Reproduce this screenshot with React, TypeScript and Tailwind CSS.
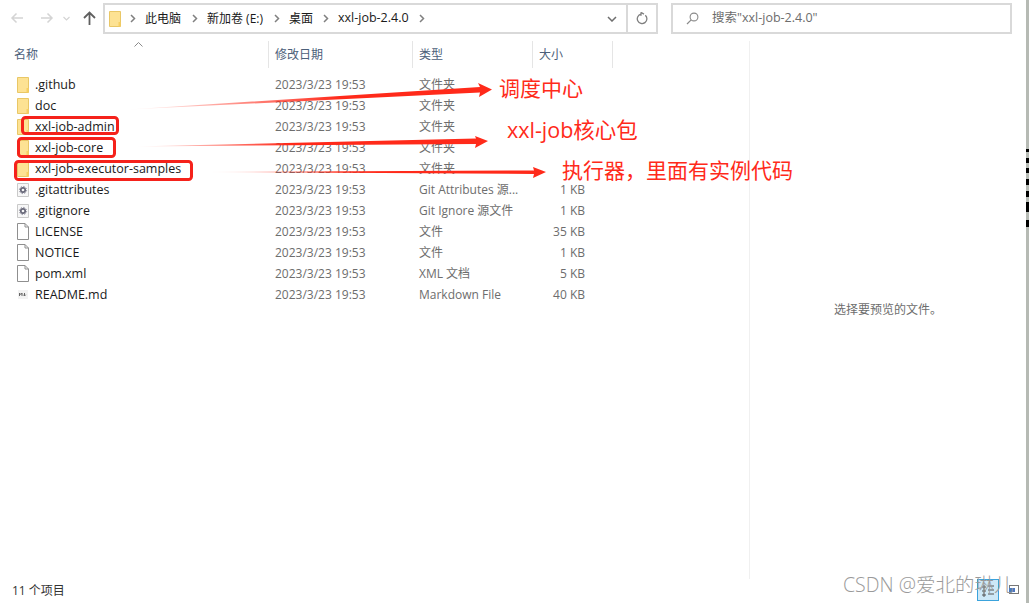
import { Fragment } from "react";

type Kind = "folder" | "config" | "file" | "md";

const rows: { name: string; kind: Kind; type: string; size?: string }[] = [
  { name: ".github", kind: "folder", type: "文件夹" },
  { name: "doc", kind: "folder", type: "文件夹" },
  { name: "xxl-job-admin", kind: "folder", type: "文件夹" },
  { name: "xxl-job-core", kind: "folder", type: "文件夹" },
  { name: "xxl-job-executor-samples", kind: "folder", type: "文件夹" },
  { name: ".gitattributes", kind: "config", type: "Git Attributes 源...", size: "1 KB" },
  { name: ".gitignore", kind: "config", type: "Git Ignore 源文件", size: "1 KB" },
  { name: "LICENSE", kind: "file", type: "文件", size: "35 KB" },
  { name: "NOTICE", kind: "file", type: "文件", size: "1 KB" },
  { name: "pom.xml", kind: "file", type: "XML 文档", size: "5 KB" },
  { name: "README.md", kind: "md", type: "Markdown File", size: "40 KB" },
];

const crumbs = [
  { label: "此电脑", cls: "w-[36px] mr-[11px]" },
  { label: "新加卷 (E:)", cls: "w-[58px] mr-[9px]" },
  { label: "桌面", cls: "w-[24px] mr-[10px]" },
  { label: "xxl-job-2.4.0", cls: "w-[71px] mr-[10px] text-[12.5px]" },
];

function FolderIcon({ className = "" }: { className?: string }) {
  return (
    <svg width="14" height="16" viewBox="0 0 14 16" className={className}>
      <path d="M1.5 .5h11v15h-11z" fill="#fde293" stroke="#e9c766" />
      <path d="M10.5 11h2v4.500h-2z" fill="#f6cf62" />
    </svg>
  );
}

function FileIcon({ kind }: { kind: Kind }) {
  if (kind === "folder") return <FolderIcon />;
  if (kind === "md")
    return (
      <svg width="14" height="16" viewBox="0 0 14 16">
        <path d="M2 3h10v9H2z" fill="#f2f2f2" />
        <path d="M3.5 9V6l1.300 1.600L6 6v3M8.500 6v3M7.300 7.700l1.200 1.300 1.200-1.300" fill="none" stroke="#666" strokeWidth="1" />
      </svg>
    );
  if (kind === "config")
    return (
      <svg width="14" height="16" viewBox="0 0 14 16">
        <path d="M1.5 1.5h11v13h-11z" fill="#f7f7f7" stroke="#c9c9c9" />
        <circle cx="7" cy="8" r="2.2" fill="none" stroke="#667" strokeWidth="1.7" />
        <circle cx="7" cy="8" r="3.6" fill="none" stroke="#889" strokeWidth="1" strokeDasharray="1.4 1.4" />
      </svg>
    );
  return (
    <svg width="14" height="17" viewBox="0 0 14 17">
      <path d="M1.5 .5h7.500l3.500 3.500v12.500h-11z" fill="#fff" stroke="#8f8f8f" />
      <path d="M9 .5v3.500h3.500" fill="none" stroke="#8f8f8f" />
    </svg>
  );
}

function Chevron() {
  return (
    <svg width="6" height="9" viewBox="0 0 6 9" className="shrink-0">
      <path d="M1 1l3.500 3.500L1 8" fill="none" stroke="#808080" strokeWidth="1.500" />
    </svg>
  );
}

function Toolbar() {
  return (
    <div className="flex h-[34px] items-start pt-[3px]">
      <div className="flex h-[30px] w-[103px] shrink-0 items-center pl-[10px]">
        <svg width="14" height="12" viewBox="0 0 14 12">
          <path d="M13 6H2M6.500 1.500L2 6l4.500 4.500" fill="none" stroke="#d4d4d4" strokeWidth="1.500" />
        </svg>
        <svg width="14" height="12" viewBox="0 0 14 12" className="ml-[16px]">
          <path d="M1 6h11M7.500 1.500L12 6l-4.500 4.500" fill="none" stroke="#d4d4d4" strokeWidth="1.500" />
        </svg>
        <svg width="7" height="5" viewBox="0 0 7 5" className="ml-[9px]">
          <path d="M.5 1l3 3 3-3" fill="none" stroke="#d4d4d4" strokeWidth="1.200" />
        </svg>
        <svg width="13" height="14" viewBox="0 0 13 14" className="ml-[13px]">
          <path d="M6.500 14V2M1 7l5.500-5.500L12 7" fill="none" stroke="#5f5f5f" strokeWidth="1.800" />
        </svg>
      </div>
      <div className="flex h-[31px] w-[555px] shrink-0 items-center border-2 border-[#d9d9d9] pl-[3px] text-[12px] text-[#1a1a1a]">
        <FolderIcon />
        <div className="ml-[8px] flex items-center">
          {crumbs.map((c) => (
            <Fragment key={c.label}>
              <Chevron />
              <span className={`ml-[9px] whitespace-nowrap ${c.cls}`}>{c.label}</span>
            </Fragment>
          ))}
          <Chevron />
        </div>
        <div className="ml-auto flex h-full items-center">
          <svg width="10" height="6" viewBox="0 0 10 6">
            <path d="M1 1l4 4 4-4" fill="none" stroke="#6e6e6e" strokeWidth="1.500" />
          </svg>
          <div className="ml-[9px] flex h-full w-[30px] items-center justify-center border-l-2 border-[#d9d9d9]">
            <svg width="12" height="13" viewBox="0 0 12 13">
              <path d="M9.300 3.200A4.800 4.800 0 1 1 5 2.100M5 .2v3.600M5 .4l3 1.700" fill="none" stroke="#808080" strokeWidth="1.300" />
            </svg>
          </div>
        </div>
      </div>
      <div className="ml-[13px] flex h-[31px] w-[341px] shrink-0 items-center border-2 border-[#d9d9d9] pl-[13px] text-[12.5px] text-[#6d6d6d]">
        <svg width="13" height="13" viewBox="0 0 13 13">
          <circle cx="8" cy="5" r="3.900" fill="none" stroke="#8a8a8a" strokeWidth="1.100" />
          <path d="M5.200 7.800L1 12" stroke="#8a8a8a" strokeWidth="1.200" />
        </svg>
        <span className="ml-[13px]">搜索"xxl-job-2.4.0"</span>
      </div>
    </div>
  );
}

function HeaderRow() {
  const cols = [
    { label: "名称", cls: "w-[269px] pl-[14px]" },
    { label: "修改日期", cls: "w-[144px] pl-[6px]" },
    { label: "类型", cls: "w-[120px] pl-[6px]" },
    { label: "大小", cls: "w-[80px] pl-[6px]" },
  ];
  return (
    <div className="relative mt-[7px] flex h-[27px] text-[12px] text-[#4c607a]">
      {cols.map((c) => (
        <div key={c.label} className={`flex items-center border-r border-[#e5e5e5] ${c.cls}`}>
          {c.label}
        </div>
      ))}
      <svg width="9" height="5" viewBox="0 0 9 5" className="absolute left-[134px] top-[1px]">
        <path d="M.5 4.500l4-4 4 4" fill="none" stroke="#8a8a8a" />
      </svg>
    </div>
  );
}

function FileRow({ row }: { row: (typeof rows)[number] }) {
  return (
    <div className="flex h-[21px] items-center text-[12px]">
      <div className="flex w-[275px] items-center pl-[16px]">
        <div className="flex w-[19px]">
          <FileIcon kind={row.kind} />
        </div>
        <span className="whitespace-nowrap pt-[2px] text-[12.5px] text-[#1a1a1a]">{row.name}</span>
      </div>
      <span className="w-[144px] whitespace-nowrap text-[#6d6d6d]">2023/3/23 19:53</span>
      <span className="w-[120px] whitespace-nowrap text-[#6d6d6d]">{row.type}</span>
      <span className="w-[46px] whitespace-nowrap text-right text-[#6d6d6d]">{row.size}</span>
    </div>
  );
}

function Annotations() {
  const red = "#ff2a1a";
  return (
    <>
      <svg width="1029" height="603" viewBox="0 0 1029 603" className="pointer-events-none absolute left-0 top-0">
        <defs>
          <linearGradient id="a1" x1="128" x2="340" y1="0" y2="0" gradientUnits="userSpaceOnUse">
            <stop offset="0" stopColor={red} stopOpacity="0" />
            <stop offset="1" stopColor={red} />
          </linearGradient>
          <linearGradient id="a2" x1="133" x2="290" y1="0" y2="0" gradientUnits="userSpaceOnUse">
            <stop offset="0" stopColor={red} stopOpacity="0" />
            <stop offset="1" stopColor={red} />
          </linearGradient>
          <linearGradient id="a3" x1="205" x2="340" y1="0" y2="0" gradientUnits="userSpaceOnUse">
            <stop offset="0" stopColor={red} stopOpacity="0" />
            <stop offset="1" stopColor={red} />
          </linearGradient>
        </defs>
        <path d="M128 109.500L480 87L478 83L492 89.500L479 97L480 92.500z" fill="url(#a1)" />
        <path d="M133 146.500L476 138.500L475 136L488 141L475 148L476 144z" fill="url(#a2)" />
        <path d="M205 172L534 170.500L533 167L546 172L533 178L534 174z" fill="url(#a3)" />
        <rect x="22.500" y="117.500" width="95" height="16" rx="3" fill="none" stroke="#f5221b" strokeWidth="3" />
        <rect x="18.500" y="138.500" width="96" height="18" rx="3" fill="none" stroke="#f5221b" strokeWidth="3" />
        <rect x="15.500" y="161.500" width="176" height="18" rx="3" fill="none" stroke="#f5221b" strokeWidth="3" />
        <rect x="977.500" y="579.500" width="21" height="21" fill="#cde8f7" stroke="#3ba3dc" />
        <path d="M983 586h2v2h-2zM983 590h2v2h-2zM983 594h2v2h-2zM988 586h6M988 590h6M988 594h6" stroke="#555" fill="none" />
        <rect x="1009.500" y="585.500" width="9" height="8" fill="#fff" stroke="#777" />
        <rect x="1009" y="588" width="6" height="4" fill="#4a78c0" />
      </svg>
      <span className="absolute left-[499px] top-[74px] text-[21px] leading-[28px] text-[#ff2a1a]">调度中心</span>
      <span className="absolute left-[507px] top-[116px] text-[21.5px] leading-[28px] text-[#ff2a1a]">xxl-job核心包</span>
      <span className="absolute left-[562px] top-[156px] text-[21px] leading-[28px] text-[#ff2a1a]">执行器，里面有实例代码</span>
      <span className="absolute left-[843px] top-[573px] whitespace-nowrap text-[19.5px] leading-[24px] font-light text-[#9a9a9a]">CSDN @爱北的琳儿</span>
    </>
  );
}

export default function App() {
  return (
    <div className="relative flex h-[603px] w-[1029px] overflow-hidden bg-white font-['Open_Sans','Noto_Sans_CJK_SC',sans-serif]">
      <div className="flex min-w-0 flex-1 flex-col">
        <Toolbar />
        <div className="flex min-h-0 flex-1">
          <div className="flex w-[749px] shrink-0 flex-col">
            <HeaderRow />
            <div className="mt-[6px] flex flex-col">
              {rows.map((r) => (
                <FileRow key={r.name} row={r} />
              ))}
            </div>
          </div>
          <div className="mt-[7px] flex flex-1 items-center justify-center border-l border-[#f0f0f0] text-[12px] text-[#6d6d6d]">
            选择要预览的文件。
          </div>
        </div>
        <div className="flex h-[24px] items-center pl-[12px] text-[12px] text-[#333]">11 个项目</div>
      </div>
      <div className="flex w-[3px] shrink-0 flex-col bg-[#b6bab4]">
        <div className="mt-[149px] h-[3px] bg-black" />
        <div className="mt-[6px] h-[5px] bg-black" />
        <div className="mt-[5px] h-[5px] bg-black" />
        <div className="mt-[6px] h-[6px] bg-black" />
        <div className="mt-[6px] h-[6px] bg-black" />
        <div className="mt-[5px] h-[10px] bg-black" />
        <div className="mt-[8px] h-[7px] bg-black" />
      </div>
      <Annotations />
    </div>
  );
}
